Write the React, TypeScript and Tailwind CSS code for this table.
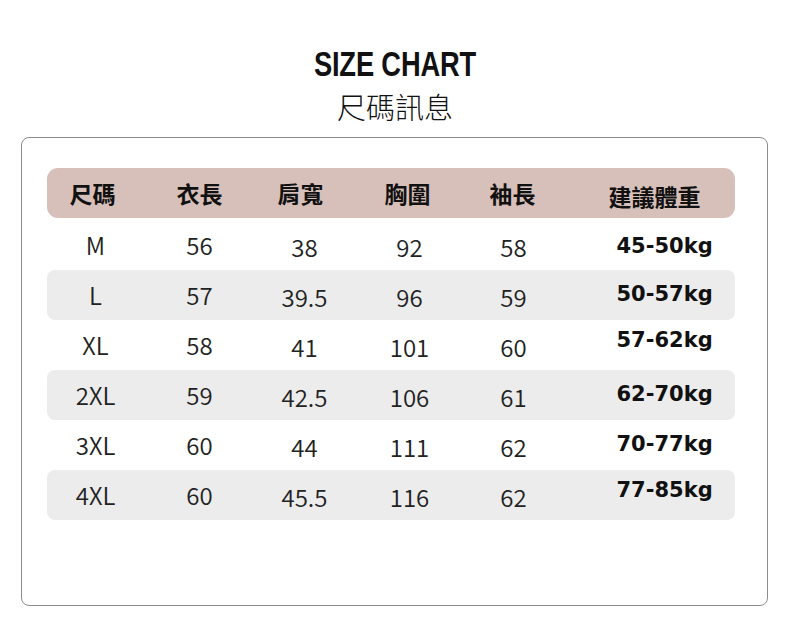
import React from "react";

const rows = [
  { s: "M", a: "56", b: "38", c: "92", d: "58", w: "45-50kg", bg: false, wo: "pt-[3px]" },
  { s: "L", a: "57", b: "39.5", c: "96", d: "59", w: "50-57kg", bg: true, wo: "" },
  { s: "XL", a: "58", b: "41", c: "101", d: "60", w: "57-62kg", bg: false, wo: "-mt-[9px]" },
  { s: "2XL", a: "59", b: "42.5", c: "106", d: "61", w: "62-70kg", bg: true, wo: "" },
  { s: "3XL", a: "60", b: "44", c: "111", d: "62", w: "70-77kg", bg: false, wo: "" },
  { s: "4XL", a: "60", b: "45.5", c: "116", d: "62", w: "77-85kg", bg: true, wo: "-mt-[8px]" },
];

const cjk = { fontFamily: '"Noto Sans CJK TC", "Noto Sans", sans-serif' };

export default function App() {
  return (
    <div className="w-[790px] h-[626px] bg-white flex flex-col items-center" style={cjk}>
      <div className="mt-[44px] h-[40px] flex items-center justify-center">
        <div
          className="text-[35px] leading-[40px] font-bold text-[#111] scale-x-[0.78] tracking-[-0.2px]"
          style={{ fontFamily: '"Liberation Sans", Arial, sans-serif' }}
        >
          SIZE CHART
        </div>
      </div>
      <div className="mt-[2px] text-[29px] leading-[40px] font-light text-[#111]">尺碼訊息</div>
      <div className="mt-[11px] ml-[-2px] w-[747px] h-[469px] border border-[#8c8c8c] rounded-[8px] pt-[30px] pl-[25px]">
        <div className="w-[688px] h-[50px] bg-[#d8c0ba] rounded-[11px] grid grid-cols-[98px_110px_100px_110px_98px_172px] items-center text-[23px] font-bold text-[#111]">
          <div className="text-center pr-[6px]">尺碼</div>
          <div className="text-center">衣長</div>
          <div className="text-center pr-[8px]">肩寬</div>
          <div className="text-center pr-[4px]">胸圍</div>
          <div className="text-center pr-[2px]">袖長</div>
          <div className="text-center pl-[12px] pt-[6px]">建議體重</div>
        </div>
        <div className="mt-[2px] flex flex-col">
          {rows.map((r) => (
            <div
              key={r.s}
              className={`w-[688px] h-[50px] rounded-[8px] grid grid-cols-[98px_110px_100px_110px_98px_172px] items-center text-[24px] font-[350] text-[#222] ${r.bg ? "bg-[#ececec]" : ""}`}
            >
              <div className="text-center">{r.s}</div>
              <div className="text-center">{r.a}</div>
              <div className="text-center pt-[4px]">{r.b}</div>
              <div className="text-center pt-[4px]">{r.c}</div>
              <div className="text-center pt-[4px]">{r.d}</div>
              <div
                className={`pl-[54px] text-[21px] font-bold text-[#111] ${r.wo}`}
                style={{ fontFamily: '"DejaVu Sans", sans-serif' }}
              >
                {r.w}
              </div>
            </div>
          ))}
        </div>
      </div>
    </div>
  );
}
